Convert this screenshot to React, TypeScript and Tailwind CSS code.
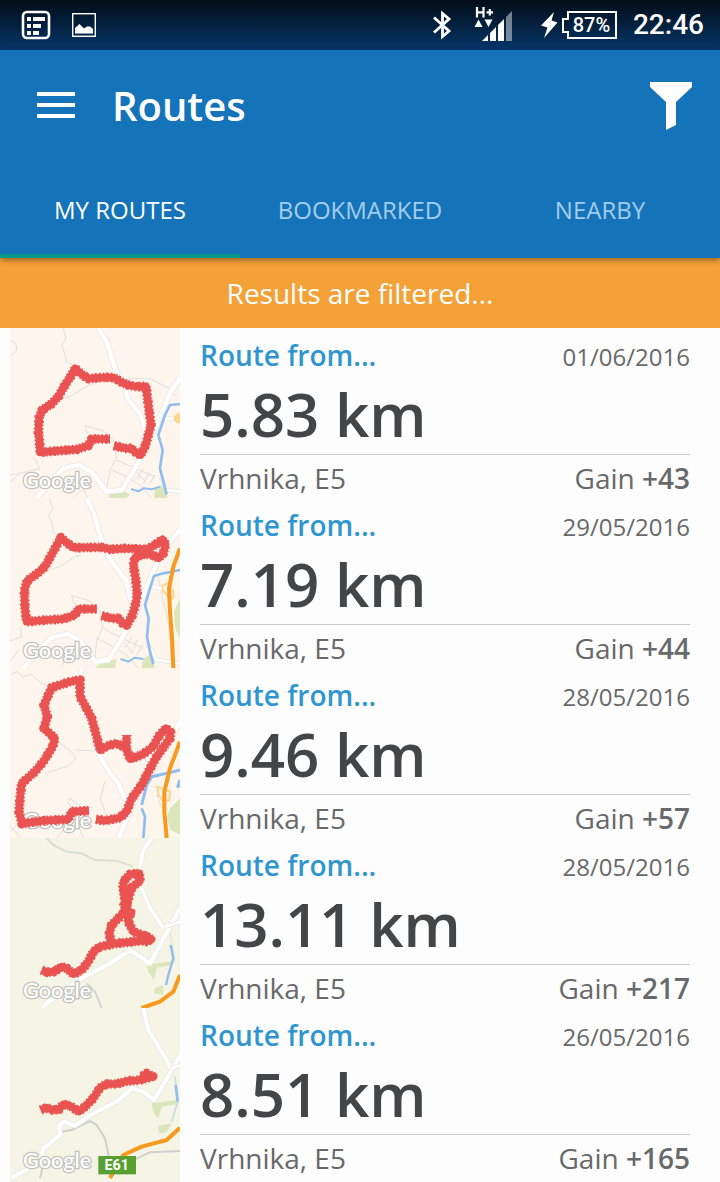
import { useState, type ReactNode } from "react";

type Road = { d: string; color?: string; width?: number; casing?: boolean };

type Route = {
  id: number;
  date: string;
  distance: string;
  gain: string;
  land: string;
  roads: Road[];
  parks: string[];
  tracks: string[];
  sign?: string;
};

const WATER = "#8fbdf0";
const HIGHWAY = "#f79a1e";
const MINOR = "#dfe1da";

const routes: Route[] = [
  {
    id: 1,
    date: "01/06/2016",
    distance: "5.83 km",
    gain: "+43",
    land: "#fef5ed",
    parks: ["M325 519 L330 502 L370 497 L390 507 L380 519Z", "M462 519 L465 490 L485 480 L500 500 L502 519Z"],
    roads: [
      { d: "M190 9 L198 40 L186 62 L194 85 L200 112 L225 122" },
      { d: "M30 95 L50 75 L48 55 L32 48" },
      { d: "M165 228 L215 212 L262 182 L285 175" },
      { d: "M365 165 L400 160 L450 162 L505 188 L530 215" },
      { d: "M255 302 L310 318 L340 345 L350 400 L330 435 L320 490" },
      { d: "M255 302 L262 325 L275 335" },
      { d: "M335 435 L380 455 L420 480 L455 519" },
      { d: "M350 405 L410 432 L465 455" },
      { d: "M400 430 L440 475 M430 430 L410 462 M450 440 L430 475 M465 450 L447 480" },
      { d: "M100 395 L120 430 L60 445 L30 450" },
      { d: "M30 470 L60 445 M220 519 L250 490 L262 519" },
      { d: "M295 9 L320 50 L345 130 L370 180 L385 225 L420 265 L435 315", color: "#ffffff", width: 13, casing: true },
      { d: "M540 160 L512 200 L480 275 L450 345 L405 430 L365 495 L320 500 L275 440 L235 420 L190 430 L110 519", color: "#ffffff", width: 13, casing: true },
      { d: "M480 270 L500 282 L540 278", color: "#ffffff", width: 9, casing: true },
      { d: "M540 500 L500 495 L480 450", color: "#ffffff", width: 8, casing: true },
      { d: "M540 237 L510 240 L495 270 L485 300 L475 330 L488 375 L480 430 L490 470 L500 508", color: WATER, width: 8 },
      { d: "M393 492 L415 499 L430 490 L455 493 L480 485", color: WATER, width: 6 },
      { d: "M525 280 L535 268 L540 290 L532 290Z", color: "#fbd78c", width: 10 },
    ],
    tracks: [
      "M342 362 L375 370 L395 370 L408 383 L422 390 L437 360 L445 330 L453 300 L447 255 L442 215 L438 184 L410 185 L385 180 L365 172 L342 158 L315 157 L265 161 L245 148 L225 130 L215 150 L195 180 L175 215 L155 236 L127 255 L118 275 L115 320 L119 350 L120 382 L180 377 L230 373 L265 362 L275 342 L330 342",
    ],
  },
  {
    id: 2,
    date: "29/05/2016",
    distance: "7.19 km",
    gain: "+44",
    land: "#fef5ed",
    parks: ["M325 9 L340 0 L385 0 L390 9Z", "M465 9 L505 9 L500 0Z", "M285 519 L310 500 L350 492 L345 519Z", "M425 519 L430 490 L450 480 L465 519Z", "M540 310 L522 350 L525 400 L540 430Z"],
    roads: [
      { d: "M148 9 L158 40 L145 62 L156 80 L158 110 L180 125" },
      { d: "M125 230 L180 215 L225 185 L245 180" },
      { d: "M215 302 L270 318 L300 345 L308 400 L290 435 L285 490" },
      { d: "M215 302 L222 325 L235 335" },
      { d: "M290 430 L340 455 L380 480 L415 519" },
      { d: "M310 400 L370 432 L430 460" },
      { d: "M360 430 L400 475 M395 425 L375 460 M412 435 L393 475 M428 450 L410 480" },
      { d: "M62 395 L65 425 L30 438 M30 500 L60 460 M185 519 L195 490 L225 480" },
      { d: "M475 245 L490 320 L505 380 L515 500" },
      { d: "M260 9 L280 50 L303 130 L328 190 L380 260 L390 310 L400 320", color: "#ffffff", width: 13, casing: true },
      { d: "M540 105 L510 140 L470 205 L440 275 L405 360 L360 440 L325 495 L285 500 L240 435 L200 417 L150 430 L70 519", color: "#ffffff", width: 13, casing: true },
      { d: "M440 272 L490 282", color: "#ffffff", width: 9, casing: true },
      { d: "M440 440 L470 495 L540 505", color: "#ffffff", width: 8, casing: true },
      { d: "M540 225 L490 235 L462 243 L450 280 L435 330 L446 370 L441 425 L450 470 L460 508", color: WATER, width: 8 },
      { d: "M362 492 L385 500 L405 488 L430 492", color: WATER, width: 6 },
      { d: "M488 270 L505 265 L520 290 L520 310 L505 305 L488 285Z", color: "#fbd99a", width: 7 },
      { d: "M540 160 L520 215 L507 280 L510 350 L516 430 L520 519", color: HIGHWAY, width: 12 },
    ],
    tracks: [
      "M305 362 L335 370 L355 370 L368 385 L380 390 L395 365 L405 335 L412 300 L407 250 L400 210 L405 188 L430 178 L455 178 L475 190 L490 175 L497 148 L487 133 L465 150 L440 163 L375 160 L330 163 L305 157 L220 158 L203 145 L183 128 L172 148 L155 178 L135 215 L110 237 L82 257 L73 285 L75 340 L80 380 L140 375 L190 372 L225 360 L235 342 L290 342",
    ],
  },
  {
    id: 3,
    date: "28/05/2016",
    distance: "9.46 km",
    gain: "+57",
    land: "#fef5ed",
    parks: ["M285 9 L290 0 L345 0 L347 9Z", "M425 9 L460 0 L465 9Z", "M540 400 L510 430 L500 460 L512 495 L540 510Z"],
    roads: [
      { d: "M30 30 L50 20 L70 35 L95 28 L120 52 L145 62" },
      { d: "M175 230 L215 262 L228 280 L205 303 L135 325" },
      { d: "M225 255 L295 258" },
      { d: "M250 430 L210 400 L205 415 L225 440 M255 420 L280 430" },
      { d: "M315 350 L300 400 L320 450 M425 270 L475 340" },
      { d: "M30 500 L50 480 M170 519 L200 485 L235 480 L250 519 M30 480 L60 519" },
      { d: "M470 390 L490 440 L500 519" },
      { d: "M245 9 L240 45 M295 265 L330 325 L355 355 L375 405", color: "#ffffff", width: 13, casing: true },
      { d: "M540 170 L520 205 M415 380 L395 430 L355 519", color: "#ffffff", width: 13, casing: true },
      { d: "M410 378 L440 368 L475 375", color: "#ffffff", width: 8, casing: true },
      { d: "M540 315 L500 325 L455 335 L440 360 L425 420", color: WATER, width: 9 },
      { d: "M425 430 L435 455 L430 519", color: WATER, width: 8 },
      { d: "M540 345 L533 368", color: WATER, width: 10 },
      { d: "M472 365 L510 380 L508 405 L492 410 L475 390Z", color: "#fbd99a", width: 7 },
      { d: "M520 0 L519 9 M540 230 L510 310 L493 380 L493 440 L500 519", color: HIGHWAY, width: 12 },
    ],
    tracks: [
      "M288 463 L315 467 L360 458 L380 440 L395 400 L425 360 L445 320 L470 275 L510 220 L512 202 L497 190 L475 215 L460 245 L425 270 L390 282 L379 250 L380 210",
      "M380 250 L350 235 L325 242 L300 255 L290 215 L275 160 L257 125 L240 95 L240 45 L210 50 L155 68 L145 90 L132 120 L142 155 L132 190 L165 220 L158 245 L130 290 L105 320 L65 355 L60 400 L57 440 L66 476 L130 467 L205 463 L215 440 L267 437",
    ],
  },
  {
    id: 4,
    date: "28/05/2016",
    distance: "13.11 km",
    gain: "+217",
    land: "#f6f5e5",
    parks: ["M442 390 L515 378 L515 390 L470 398 L462 435 L445 410Z", "M465 460 L490 450 L490 480 L462 475Z"],
    roads: [
      { d: "M140 9 L160 30 L200 50 L245 55 L285 75 L350 77 L400 95", color: "#dcdcd6", width: 6 },
      { d: "M260 445 L285 470 L305 519", color: "#d3d5d0", width: 6 },
      { d: "M455 9 L430 45 L420 95 M425 160 L450 220 L490 280", color: "#ffffff", width: 11, casing: true },
      { d: "M540 220 L510 275 L450 385 L390 345 L330 385 L245 430 L170 480 L125 519", color: "#ffffff", width: 13, casing: true },
      { d: "M495 275 L540 260", color: "#ffffff", width: 9, casing: true },
      { d: "M510 290 L520 350 L525 385", color: MINOR },
      { d: "M512 330 L520 370 L505 420 L498 450", color: WATER, width: 7 },
      { d: "M540 420 L520 470 L480 500 L425 519", color: HIGHWAY, width: 12 },
    ],
    tracks: [
      "M125 405 L142 412 L162 410 L185 395 L200 400 L220 417 L245 405 L265 380 L280 350 L300 335 L350 325 L400 320 L447 315 L440 305 L400 290 L385 260 L380 220 L373 185 L370 140 L390 118 L418 115 L420 138 L395 158 L382 200 L370 235 L335 270 L328 295 L333 325",
      "M368 150 L375 185 L385 215 M368 200 L390 235 L405 238",
      "M430 300 L455 313 L432 322",
    ],
  },
  {
    id: 5,
    date: "26/05/2016",
    distance: "8.51 km",
    gain: "+165",
    land: "#f6f5e5",
    parks: ["M455 295 L530 285 L530 298 L485 305 L475 340 L460 325Z", "M475 362 L515 355 L500 382 L478 385Z"],
    roads: [
      { d: "M185 380 L215 375 L270 348 L290 360 L315 400 L330 470", color: "#cdd0cc", width: 6 },
      { d: "M540 438 L450 442 L390 470 M120 519 L130 480 L160 470", color: "#cdd0cc", width: 6 },
      { d: "M430 9 L445 75 L500 165 L510 190", color: "#ffffff", width: 12, casing: true },
      { d: "M540 150 L510 205 L462 285 L430 260 L395 250 L350 290 L280 325 L225 362 L190 350 L178 360 L180 390 L130 430 L120 470 L35 519", color: "#ffffff", width: 12, casing: true },
      { d: "M515 190 L540 180", color: "#ffffff", width: 9, casing: true },
      { d: "M525 215 L533 290 L515 350", color: "#c8dce9", width: 5 },
      { d: "M527 240 L533 290", color: WATER, width: 8 },
      { d: "M540 368 L500 405 L425 425 L370 450 L330 519", color: HIGHWAY, width: 12 },
    ],
    tracks: [
      "M122 315 L140 308 L158 315 L177 313 L190 298 L210 302 L237 320 L260 300 L280 280 L300 248 L320 237 L350 237 L385 227 L415 226 L440 220 L458 214 L440 205 L425 215",
    ],
    sign: "E61",
  },
];

function RouteMap({ route }: { route: Route }) {
  return (
    <svg className="h-full w-[170px] shrink-0" viewBox="30 9 510 522" preserveAspectRatio="xMidYMin slice" role="img" aria-label="Route map">
      <rect x="0" y="0" width="570" height="540" fill={route.land} />
      {route.parks.map((d) => (
        <path key={d} d={d} fill="#dbe6bd" />
      ))}
      <g fill="none" strokeLinejoin="round">
        {route.roads.map((road) => (
          <g key={road.d}>
            {road.casing && <path d={road.d} stroke="#e8e9e7" strokeWidth={(road.width ?? 4) + 5} />}
            <path d={road.d} stroke={road.color ?? MINOR} strokeWidth={road.width ?? 3} />
          </g>
        ))}
      </g>
      <text x="69" y="490" fontSize="65" fill="#ffffff" stroke="#c3c3bf" strokeWidth="8" paintOrder="stroke" className="font-['Lato',sans-serif] font-medium">
        Google
      </text>
      <g fill="none" stroke="#e95352" strokeLinejoin="round">
        {route.tracks.map((d) => (
          <g key={d}>
            <path d={d} strokeWidth="23" />
            <path d={d} strokeWidth="29" strokeDasharray="5 6 8 4 4 7" />
          </g>
        ))}
      </g>
      {route.sign && (
        <g>
          <rect x="295" y="453" width="113" height="55" fill="#58a032" />
          <text x="350" y="495" textAnchor="middle" fontSize="43" fill="#ffffff" className="font-['Roboto',sans-serif] font-bold">
            {route.sign}
          </text>
        </g>
      )}
    </svg>
  );
}

function StatusBar() {
  return (
    <div className="flex h-[50px] items-center justify-between bg-linear-to-b from-[#020d18] to-[#06366a] pr-4 pl-5 text-white">
      <div className="flex items-center gap-5">
        <svg width="32" height="32" viewBox="0 0 32 32" fill="none" stroke="#fff">
          <rect x="3" y="3" width="26" height="26" rx="4" strokeWidth="2.6" />
          <path d="M7 10h4M13 10h12M7 17h4M13 17h8M7 24h4M13 24h6" strokeWidth="3.8" />
        </svg>
        <svg width="24" height="24" viewBox="0 0 24 24" fill="#fff">
          <rect x="0.7" y="0.7" width="22.6" height="22.6" fill="none" stroke="#fff" strokeWidth="1.4" />
          <path d="M3 20.5V15l4.5-4 4.5 4.500 3-2h3l3 2.500v4.500Z" />
        </svg>
      </div>
      <div className="flex items-center">
        <svg width="20" height="30" viewBox="0 0 20 30" fill="none" stroke="#fff" strokeWidth="2.8" className="mr-[22px]">
          <path d="M2 7.500 17 21 10.500 26.500V3.500L17 9 2 22.500" />
        </svg>
        <svg width="38" height="36" viewBox="0 0 38 36" fill="#fff" className="mr-7">
          <path d="M3 0v10.500M9.500 0v10.500M3 5.300h6.500M12.500 5.300h6.500M15.800 2v6.500" fill="none" stroke="#fff" strokeWidth="2.2" />
          <path d="M0.500 20 4.500 12.500l4 7.500ZM10.500 12.500h8l-4 7.500Z" />
          <path d="M8 34 14 28v6ZM16 26l6-6v14h-6ZM24 18l6-6v22h-6Z" />
          <path d="M32 10l6-6v30h-6Z" opacity=".45" />
        </svg>
        <svg width="18" height="28" viewBox="0 0 18 28" fill="#fff" className="mr-1">
          <path d="M14 1 1 14.500l6.500 2L4 27 17.500 11.500l-6-2Z" />
        </svg>
        <span className="relative mr-4 flex h-7 w-[55px] items-center justify-center pl-1 font-['Roboto',sans-serif] text-xl font-medium">
          <svg className="absolute inset-0" width="55" height="28" viewBox="0 0 55 28" fill="none" stroke="#fff" strokeWidth="2">
            <path d="M6 1h48v26H6v-6H1V8h5Z" />
          </svg>
          87%
        </span>
        <span className="font-['Roboto',sans-serif] text-[28px] leading-8 font-medium">22:46</span>
      </div>
    </div>
  );
}

function Tab({ active, onSelect, children }: { active: boolean; onSelect: () => void; children: ReactNode }) {
  return (
    <button
      type="button"
      role="tab"
      aria-selected={active}
      onClick={onSelect}
      className={`flex h-24 flex-1 items-center justify-center border-b-4 pt-1 text-2xl ${active ? "border-[#09998a] text-white" : "border-transparent text-[#a2cdec]"}`}
    >
      {children}
    </button>
  );
}

function RouteRow({ route }: { route: Route }) {
  return (
    <li className="flex h-[170px] gap-5 pr-[30px] pl-[10px] last:h-[174px]">
      <RouteMap route={route} />
      <div className="min-w-0 flex-1 text-[#68696a]">
        <div className="flex h-[54px] items-center justify-between">
          <a href="#route" className="text-[28px] leading-9 font-semibold text-[#3096d2]">
            Route from...
          </a>
          <time className="pt-1 text-2xl">{route.date}</time>
        </div>
        <p className="mb-2 text-6xl leading-16 font-semibold text-[#444546]">{route.distance}</p>
        <div className="flex h-11 items-center justify-between border-t border-[#c9cacb] pt-[2px] text-[28px] leading-9">
          <span>Vrhnika, E5</span>
          <span>
            Gain <b className="font-semibold">{route.gain}</b>
          </span>
        </div>
      </div>
    </li>
  );
}

const tabs = ["MY ROUTES", "BOOKMARKED", "NEARBY"];

export default function App() {
  const [selected, setSelected] = useState(tabs[0]);
  return (
    <div className="bg-[#fdfdfd] font-['Open_Sans',sans-serif]">
      <StatusBar />
      <header className="relative bg-[#1573b9] text-white shadow-[0_2px_6px_rgba(0,0,0,0.4)]">
        <div className="flex h-28 items-center pr-7 pl-[37px]">
          <button type="button" aria-label="Menu">
            <svg width="38" height="28" viewBox="0 0 38 28" fill="#fff">
              <path d="M0 0h38v4H0ZM0 11h38v4H0ZM0 22h38v4H0Z" />
            </svg>
          </button>
          <h1 className="ml-[37px] flex-1 text-[40px] leading-[56px] font-semibold">Routes</h1>
          <button type="button" aria-label="Filter">
            <svg width="42" height="48" viewBox="0 0 42 48" fill="#fff">
              <path d="M0 0h42v5L26 20v23l-10 5V20L0 5Z" />
            </svg>
          </button>
        </div>
        <div role="tablist" className="flex">
          {tabs.map((tab) => (
            <Tab key={tab} active={tab === selected} onSelect={() => setSelected(tab)}>
              {tab}
            </Tab>
          ))}
        </div>
      </header>
      <p className="flex h-[70px] items-center justify-center bg-[#f4a137] text-[28px] leading-9 text-white">Results are filtered...</p>
      <ul>
        {routes.map((route) => (
          <RouteRow key={route.id} route={route} />
        ))}
      </ul>
    </div>
  );
}
